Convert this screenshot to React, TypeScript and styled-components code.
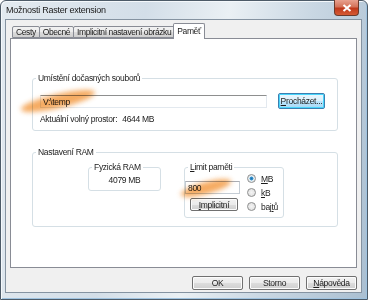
import styled, { createGlobalStyle } from 'styled-components';

const GlobalStyle = createGlobalStyle`
  html, body { margin: 0; padding: 0; background: #fff; }
  body {
    font-family: "Liberation Sans", Arial, sans-serif;
    font-size: 8.5px;
    letter-spacing: -0.3px;
    color: #1c1c1c;
  }
`;

export default function App() {
  return (
    <>
      <GlobalStyle />
      <Window>
        <TitleBar>
          <Title>Možnosti Raster extension</Title>
          <CloseButton>
            <svg width="10" height="8" viewBox="0 0 10 8">
              <path d="M1.5 1 L8.5 7 M8.5 1 L1.5 7" stroke="#fff" strokeWidth="2" />
            </svg>
          </CloseButton>
        </TitleBar>

        <Client>
          <TabStrip>
            <Tab>Cesty</Tab>
            <Tab>Obecné</Tab>
            <Tab>Implicitní nastavení obrázku</Tab>
            <Tab $active>Paměť</Tab>
          </TabStrip>

          <Panel>
            <GroupBox>
              <Legend>Umístění dočasných souborů</Legend>
              <FieldRow>
                <PathField>V:\temp</PathField>
                <Button $focused $w={47} $h={16}>
                  <u>P</u>rocházet...
                </Button>
              </FieldRow>
              <InfoLine>
                Aktuální volný prostor:<Value>4644 MB</Value>
              </InfoLine>
            </GroupBox>

            <RamGroup>
              <Legend>Nastavení RAM</Legend>
              <InnerRow>
                <PhysicalBox>
                  <Legend>Fyzická RAM</Legend>
                  <PhysicalValue>4079 MB</PhysicalValue>
                </PhysicalBox>

                <LimitBox>
                  <Legend>
                    <u>L</u>imit paměti
                  </Legend>
                  <LimitLeft>
                    <LimitField>800</LimitField>
                    <Button $w={48} $h={13} $ml={5} $mt={4}>
                      <u>I</u>mplicitní
                    </Button>
                  </LimitLeft>
                  <RadioColumn>
                    <RadioRow>
                      <Radio $checked />
                      <span>
                        <u>M</u>B
                      </span>
                    </RadioRow>
                    <RadioRow>
                      <Radio />
                      <span>
                        <u>k</u>B
                      </span>
                    </RadioRow>
                    <RadioRow>
                      <Radio />
                      <span>
                        baj<u>t</u>ů
                      </span>
                    </RadioRow>
                  </RadioColumn>
                </LimitBox>
              </InnerRow>
            </RamGroup>
          </Panel>

          <ButtonRow>
            <Button $w={51} $h={14}>OK</Button>
            <Button $w={51} $h={14}>Storno</Button>
            <Button $w={51} $h={14}>
              <u>N</u>ápověda
            </Button>
          </ButtonRow>
        </Client>

        <Highlights width="368" height="300" viewBox="0 0 368 300">
          <defs>
            <filter id="soft" x="-50%" y="-50%" width="200%" height="200%">
              <feGaussianBlur stdDeviation="2.5" />
            </filter>
          </defs>
          <ellipse cx="57" cy="100" rx="38" ry="7" transform="rotate(-13 57 100)" fill="#f3963a" opacity="0.8" filter="url(#soft)" />
          <ellipse cx="205" cy="187" rx="26" ry="6" transform="rotate(-15 205 187)" fill="#f3963a" opacity="0.8" filter="url(#soft)" />
        </Highlights>
      </Window>
    </>
  );
}

const Window = styled.div`
  position: relative;
  width: 368px;
  height: 300px;
  box-sizing: border-box;
  border: 1px solid #4d5b68;
  border-radius: 6px 6px 0 0;
  padding: 0 5px 6px 4px;
  display: flex;
  flex-direction: column;
  background: linear-gradient(100deg, #e3eaf0 0%, #d3dee8 35%, #eaf0f4 55%, #c9d7e3 75%, #aabfd1 100%);
  box-shadow: inset 1px 1px 0 #f4f8fb, inset -1px -1px 0 #9fc3e0;
`;

const TitleBar = styled.div`
  height: 18px;
  display: flex;
  align-items: flex-start;
  justify-content: space-between;
`;

const Title = styled.div`
  font-size: 9px;
  letter-spacing: -0.25px;
  color: #1a1a1a;
  padding: 4px 0 0 1px;
`;

const CloseButton = styled.div`
  width: 25px;
  height: 16px;
  margin: -1px 3px 0 0;
  box-sizing: border-box;
  border: 1px solid #6b3a2c;
  border-top: none;
  border-radius: 0 0 4px 4px;
  background: linear-gradient(180deg, #e8a18f 0%, #d4735a 45%, #c0391c 55%, #d55a33 100%);
  display: flex;
  align-items: center;
  justify-content: center;
`;

const Client = styled.div`
  flex: 1;
  display: flex;
  flex-direction: column;
  background: #f0f0f0;
  border: 1px solid #8593a1;
  padding: 3px 4px 0 4px;
`;

const TabStrip = styled.div`
  height: 15px;
  display: flex;
  align-items: flex-end;
  padding-left: 2px;
  position: relative;
  z-index: 1;
`;

const Tab = styled.div<{ $active?: boolean }>`
  box-sizing: border-box;
  height: ${(p) => (p.$active ? '16px' : '12px')};
  margin-bottom: ${(p) => (p.$active ? '-1px' : '0')};
  margin-left: ${(p) => (p.$active ? '-1px' : '0')};
  margin-right: ${(p) => (p.$active ? '0' : '-1px')};
  padding: ${(p) => (p.$active ? '2px 3px 0' : '0 3px')};
  border: 1px solid #898c95;
  border-bottom: ${(p) => (p.$active ? 'none' : '1px solid #898c95')};
  border-radius: 2px 2px 0 0;
  background: ${(p) =>
    p.$active ? '#fff' : 'linear-gradient(180deg, #f2f2f2 0%, #ebebeb 50%, #dddddd 51%, #cfcfcf 100%)'};
  line-height: 10px;
  letter-spacing: -0.4px;
  white-space: nowrap;
`;

const Panel = styled.div`
  flex: 1;
  background: #fff;
  border: 1px solid #898c95;
  padding: 39px 18px 0 21px;
  display: flex;
  flex-direction: column;
`;

const GroupBox = styled.div`
  position: relative;
  height: 53px;
  box-sizing: border-box;
  border: 1px solid #d5dfe5;
  border-radius: 3px;
  padding: 14px 8px 0 7px;
`;

const Legend = styled.span`
  position: absolute;
  top: -6px;
  left: 3px;
  padding: 0 2px;
  background: #fff;
  line-height: 11px;
  white-space: nowrap;
`;

const FieldRow = styled.div`
  display: flex;
  align-items: flex-start;
  height: 16px;
`;

const PathField = styled.div`
  width: 227px;
  height: 13px;
  margin-top: 2px;
  box-sizing: border-box;
  border: 1px solid #e3e9ef;
  border-top-color: #8e8f8f;
  padding: 1px 2px 0;
  line-height: 10px;
  margin-right: 11px;
`;

const InfoLine = styled.div`
  margin-top: 5px;
  line-height: 11px;
`;

const Value = styled.span`
  margin-left: 5px;
`;

const RamGroup = styled(GroupBox)`
  margin-top: 21px;
  height: 75px;
  padding: 14px 0 0 55px;
`;

const InnerRow = styled.div`
  display: flex;
  align-items: flex-start;
  gap: 23px;
`;

const PhysicalBox = styled.div`
  position: relative;
  width: 73px;
  height: 24px;
  box-sizing: border-box;
  border: 1px solid #d5dfe5;
  border-radius: 3px;
  text-align: center;
`;

const PhysicalValue = styled.div`
  padding-top: 7px;
  line-height: 11px;
`;

const LimitBox = styled.div`
  position: relative;
  width: 100px;
  height: 51px;
  box-sizing: border-box;
  border: 1px solid #d5dfe5;
  border-radius: 3px;
  display: flex;
`;

const LimitLeft = styled.div`
  width: 56px;
  padding-top: 13px;
  display: flex;
  flex-direction: column;
  align-items: flex-start;
`;

const LimitField = styled.div`
  width: 55px;
  height: 13px;
  box-sizing: border-box;
  border: 1px solid #c5cdd5;
  border-top-color: #abadb3;
  padding: 1px 2px 0;
  line-height: 10px;
`;

const RadioColumn = styled.div`
  margin-left: 6px;
  padding-top: 4px;
  display: flex;
  flex-direction: column;
`;

const RadioRow = styled.div`
  height: 15px;
  display: flex;
  align-items: center;
  gap: 5px;
  margin-top: -1px;
`;

const Radio = styled.span<{ $checked?: boolean }>`
  width: 9px;
  height: 9px;
  box-sizing: border-box;
  border-radius: 50%;
  border: 1px solid #8e8f8f;
  background: ${(p) =>
    p.$checked
      ? 'radial-gradient(circle, #1f6fae 0%, #3c9bd4 35%, #dfe9ef 45%, #f4f4f4 100%)'
      : 'radial-gradient(circle, #f4f4f4 0%, #dcdcdc 100%)'};
`;

const Button = styled.div<{ $w: number; $h: number; $focused?: boolean; $ml?: number; $mt?: number }>`
  width: ${(p) => p.$w}px;
  height: ${(p) => p.$h}px;
  margin-left: ${(p) => p.$ml ?? 0}px;
  margin-top: ${(p) => p.$mt ?? 0}px;
  box-sizing: border-box;
  border: 1px solid ${(p) => (p.$focused ? '#3c7fb1' : '#707070')};
  border-radius: 2px;
  background: ${(p) =>
    p.$focused
      ? 'linear-gradient(180deg, #eaf6fd 0%, #d9f0fc 50%, #bee6fd 51%, #a7d9f5 100%)'
      : 'linear-gradient(180deg, #f2f2f2 0%, #ebebeb 50%, #dddddd 51%, #cfcfcf 100%)'};
  box-shadow: inset 0 0 0 1px ${(p) => (p.$focused ? '#48d5fb' : '#fcfcfc')};
  display: flex;
  align-items: center;
  justify-content: center;
  line-height: 10px;
  white-space: nowrap;
`;

const ButtonRow = styled.div`
  height: 24px;
  box-sizing: border-box;
  padding-top: 8px;
  display: flex;
  justify-content: flex-end;
  gap: 6px;
`;

const Highlights = styled.svg`
  position: absolute;
  left: 0;
  top: 0;
  pointer-events: none;
  mix-blend-mode: multiply;
`;
